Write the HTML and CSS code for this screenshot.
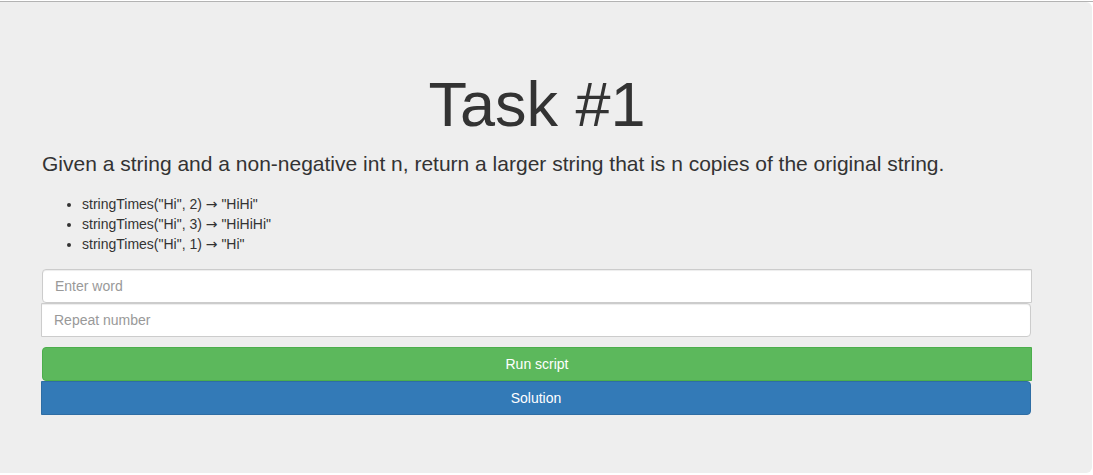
FILE: index.html
```html
<!DOCTYPE html>
<html>
<head>
<meta charset="utf-8">
<title>Task #1</title>
<link rel="stylesheet" href="styles.css">
</head>
<body>
<div class="topline"></div>
<div class="jumbotron">
  <h1 class="title">Task #1</h1>
  <p class="lead">Given a string and a non-negative int n, return a larger string that is n copies of the original string.</p>
  <ul class="examples">
    <li>stringTimes("Hi", 2) <span class="arrow">→</span> "HiHi"</li>
    <li>stringTimes("Hi", 3) <span class="arrow">→</span> "HiHiHi"</li>
    <li>stringTimes("Hi", 1) <span class="arrow">→</span> "Hi"</li>
  </ul>
  <div class="fields">
    <input class="field field-first" type="text" placeholder="Enter word">
    <input class="field field-second" type="text" placeholder="Repeat number">
  </div>
  <div class="actions">
    <button class="btn btn-run">Run script</button>
    <button class="btn btn-solution">Solution</button>
  </div>
</div>
</body>
</html>
```
FILE: styles.css
```css
* { box-sizing: border-box; }
html, body { margin: 0; padding: 0; background: #fff; }
body {
  font-family: "Liberation Sans", Arial, Helvetica, sans-serif;
  font-size: 14px;
  line-height: 1.42857;
  color: #333;
  padding-top: 1px;
}
.topline { height: 1px; background: #b3b3b3; }
.jumbotron {
  width: 1092px;
  background: #eee;
  border-radius: 0 6px 6px 0;
  padding: 48px 60px 58px 42px;
}
.title {
  margin: 20px 0 10px;
  font-size: 63px;
  font-weight: 500;
  line-height: 1.1;
  text-align: center;
  width: 990px;
}
.lead {
  margin: 0 0 15px;
  font-size: 21px;
  font-weight: 400;
  line-height: 30px;
}
.examples {
  margin: 0 0 15px;
  padding-left: 40px;
  line-height: 20px;
}
.examples li { height: 20px; }
.arrow { font-family: "DejaVu Sans", sans-serif; font-size: 14px; line-height: 1; }
.fields, .actions { display: flex; flex-direction: column; width: 990px; }
.field {
  display: block;
  width: 990px;
  height: 34px;
  padding: 6px 12px;
  font-family: inherit;
  font-size: 14px;
  color: #555;
  background: #fff;
  border: 1px solid #ccc;
  box-shadow: inset 0 1px 1px rgba(0,0,0,.075);
  outline: none;
}
.field::placeholder { color: #999; }
.field-first { border-radius: 4px 0 0 4px; }
.field-second { border-radius: 0 4px 4px 0; margin-left: -1px; }
.actions { margin-top: 10px; }
.btn {
  display: block;
  width: 990px;
  height: 34px;
  padding: 6px 12px;
  font-family: inherit;
  font-size: 14px;
  line-height: 20px;
  color: #fff;
  text-align: center;
  border: 1px solid transparent;
  cursor: pointer;
}
.btn-run { background: #5cb85c; border-color: #4cae4c; border-radius: 4px 0 0 4px; }
.btn-solution { background: #337ab7; border-color: #2e6da4; border-radius: 0 4px 4px 0; margin-left: -1px; }
```
